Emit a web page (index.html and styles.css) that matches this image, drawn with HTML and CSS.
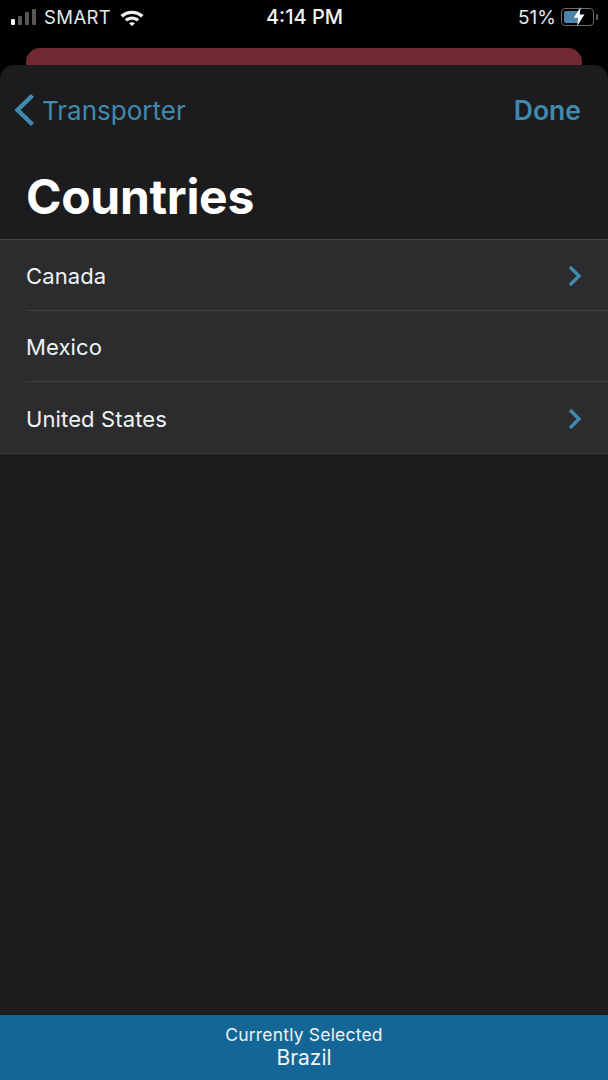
FILE: index.html
```html
<!DOCTYPE html>
<html lang="en">
<head>
    <meta charset="UTF-8">
    <meta name="viewport" content="width=device-width, initial-scale=1.0">
    <title>Countries</title>
    <link rel="stylesheet" href="styles.css">
</head>
<body>
    <div class="status-bar">
        <div class="status-left">
            <div class="signal">
                <span class="bar bar-on"></span>
                <span class="bar bar-2"></span>
                <span class="bar bar-3"></span>
                <span class="bar bar-4"></span>
            </div>
            <span class="carrier">SMART</span>
            <svg class="wifi" width="24" height="17" viewBox="0 0 24 17">
                <path d="M0.5 6 C7 .2 17 .2 23.5 6 L21.2 8.4 C16 3.8 8 3.8 2.8 8.4 Z" fill="#f2f2f2"/>
                <path d="M4.8 10.2 C9 6.6 15 6.6 19.2 10.2 L16.9 12.5 C14 10.2 10 10.2 7.1 12.5 Z" fill="#f2f2f2"/>
                <path d="M9 14.2 C10.8 12.9 13.2 12.9 15 14.2 L12 17 Z" fill="#f2f2f2"/>
            </svg>
        </div>
        <div class="status-time">4:14 PM</div>
        <div class="status-right">
            <span class="percent">51%</span>
            <div class="battery">
                <div class="battery-fill"></div>
                <svg class="bolt" width="12" height="19" viewBox="0 0 10 16">
                    <path d="M6.4 0 L0.6 9 H4.4 L3.4 16 L9.6 6.4 H5.6 Z" fill="#fff"/>
                </svg>
            </div>
            <span class="battery-cap"></span>
        </div>
    </div>

    <div class="behind-card"></div>

    <div class="sheet">
        <nav class="nav-bar">
            <div class="nav-back">
                <svg width="22" height="34" viewBox="0 0 22 34">
                    <path d="M18.5 2.5 L3.5 17 L18.5 31.5" fill="none" stroke="#4189ad" stroke-width="4.4"/>
                </svg>
                <span>Transporter</span>
            </div>
            <span class="nav-done">Done</span>
        </nav>

        <h1 class="title">Countries</h1>

        <ul class="list">
            <li class="row">
                <span>Canada</span>
                <svg class="chevron" width="14" height="22" viewBox="0 0 14 22">
                    <path d="M2 2 L11 11 L2 20" fill="none" stroke="#4189ad" stroke-width="3.4"/>
                </svg>
            </li>
            <li class="row">
                <span>Mexico</span>
            </li>
            <li class="row">
                <span>United States</span>
                <svg class="chevron" width="14" height="22" viewBox="0 0 14 22">
                    <path d="M2 2 L11 11 L2 20" fill="none" stroke="#4189ad" stroke-width="3.4"/>
                </svg>
            </li>
        </ul>

        <div class="spacer"></div>

        <footer class="selected">
            <div class="selected-label">Currently Selected</div>
            <div class="selected-name">Brazil</div>
        </footer>
    </div>
</body>
</html>
```

FILE: styles.css
```css
* {
    box-sizing: border-box;
}

html, body {
    height: 100%;
}

body {
    font-family: Inter, "Liberation Sans", sans-serif;
    margin: 0;
    background: #000;
    color: #f2f2f2;
    display: flex;
    flex-direction: column;
    height: 1080px;
    overflow: hidden;
}

.status-bar {
    height: 48px;
    padding: 0 10px 14px 11px;
    display: grid;
    grid-template-columns: 1fr auto 1fr;
    align-items: center;
    font-size: 18.5px;
}

.status-left, .status-right {
    display: flex;
    align-items: center;
}

.status-right {
    justify-content: flex-end;
}

.signal {
    display: flex;
    align-items: flex-end;
    gap: 3px;
    height: 16px;
}

.bar {
    width: 4px;
    background: #575757;
    border-radius: 1px;
}

.bar-on {
    height: 6px;
    background: #f4f4f4;
}

.bar-2 { height: 9px; }
.bar-3 { height: 13px; }
.bar-4 { height: 16px; }

.carrier {
    margin-left: 8px;
    letter-spacing: 0.4px;
    color: #e4e8ea;
}

.wifi {
    margin-left: 9px;
}

.status-time {
    font-size: 20px;
    font-weight: 500;
    color: #f4f4f4;
}

.percent {
    font-size: 19px;
    color: #e4e8ea;
    margin-right: 5px;
}

.battery {
    position: relative;
    width: 33px;
    height: 18px;
    padding: 2px;
    border: 1px solid #6b6b6b;
    border-radius: 4px;
}

.battery-fill {
    width: 15px;
    height: 100%;
    background: #4d84ae;
    border-radius: 2px;
}

.bolt {
    position: absolute;
    left: 11px;
    top: -2px;
}

.battery-cap {
    width: 2px;
    height: 6px;
    margin-left: 2px;
    background: #5c5c5c;
    border-radius: 0 1px 1px 0;
}

.behind-card {
    height: 17px;
    margin: 0 26px;
    background: #722833;
    border-radius: 14px 14px 0 0;
}

.sheet {
    flex: 1;
    display: flex;
    flex-direction: column;
    background: #1c1c1e;
    border-radius: 14px 14px 0 0;
    overflow: hidden;
}

.nav-bar {
    height: 90px;
    padding: 0 27px 0 14px;
    display: flex;
    justify-content: space-between;
    align-items: center;
    color: #4189ad;
}

.nav-back {
    display: flex;
    align-items: center;
    gap: 6px;
    font-size: 26px;
}

.nav-done {
    font-size: 26.5px;
    font-weight: 600;
}

.title {
    margin: 0;
    height: 84px;
    padding-left: 26px;
    font-size: 48px;
    font-weight: 700;
    line-height: 83px;
    letter-spacing: -0.3px;
    color: #fff;
}

.list {
    margin: 0;
    padding: 0;
    list-style: none;
    background: #2c2c2e;
    border-top: 1px solid #48484a;
}

.row {
    height: 71px;
    margin-left: 26px;
    padding: 2px 26px 0 0;
    display: flex;
    justify-content: space-between;
    align-items: center;
    font-size: 22px;
    letter-spacing: 0.12px;
    color: #eef3f5;
    border-bottom: 1px solid #404042;
}

.row:last-child {
    height: 72px;
    margin-left: 0;
    padding-left: 26px;
    border-bottom-color: #38383a;
}

.spacer {
    flex: 1;
}

.selected {
    height: 65px;
    padding-top: 9px;
    background: #136695;
    text-align: center;
    color: #eef3f5;
}

.selected-label {
    font-size: 17.5px;
    line-height: 21px;
    letter-spacing: 0.2px;
}

.selected-name {
    font-size: 21px;
    line-height: 26px;
}
```
